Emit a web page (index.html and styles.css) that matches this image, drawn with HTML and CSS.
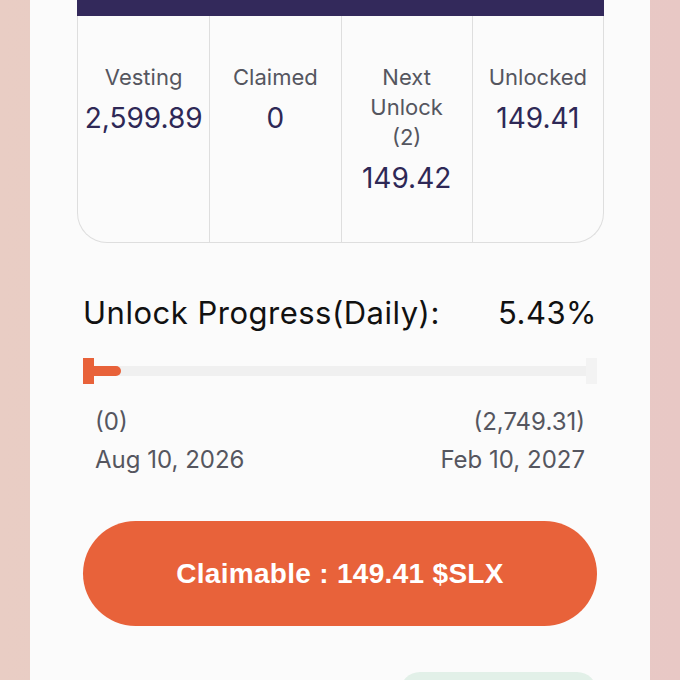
FILE: index.html
```html
<!DOCTYPE html>
<html lang="en">
<head>
    <meta charset="UTF-8">
    <meta name="viewport" content="width=device-width, initial-scale=1.0">
    <title>Vesting Overview</title>
    <link rel="stylesheet" href="styles.css">
</head>
<body>
    <div class="card">
        <div class="stats">
            <div class="stats-head"></div>
            <div class="stats-row">
                <div class="cell">
                    <div class="label">Vesting</div>
                    <div class="value">2,599.89</div>
                </div>
                <div class="cell">
                    <div class="label">Claimed</div>
                    <div class="value">0</div>
                </div>
                <div class="cell">
                    <div class="label">Next<br>Unlock<br>(2)</div>
                    <div class="value">149.42</div>
                </div>
                <div class="cell">
                    <div class="label">Unlocked</div>
                    <div class="value">149.41</div>
                </div>
            </div>
        </div>

        <div class="progress">
            <div class="progress-title">
                <span>Unlock Progress(Daily):</span>
                <span>5.43%</span>
            </div>
            <div class="bar">
                <div class="bar-start"></div>
                <div class="bar-track">
                    <div class="bar-fill" style="width: 5.43%;"></div>
                </div>
                <div class="bar-end"></div>
            </div>
            <div class="bar-labels">
                <div>
                    <div>(0)</div>
                    <div>Aug 10, 2026</div>
                </div>
                <div class="right">
                    <div>(2,749.31)</div>
                    <div>Feb 10, 2027</div>
                </div>
            </div>
        </div>

        <button class="claim">Claimable : 149.41 $SLX</button>

        <div class="footer">
            <div class="pill"></div>
        </div>
    </div>
</body>
</html>
```

FILE: styles.css
```css
body {
    margin: 0;
    font-family: Inter, "Noto Sans", sans-serif;
    background: linear-gradient(90deg, #e9cdc4 0%, #e8c8c5 100%);
    min-height: 680px;
}
.card {
    margin: 0 30px;
    min-height: 680px;
    background-color: #fbfbfb;
    padding: 0 46px 0 47px;
    box-sizing: border-box;
}
.stats-head {
    height: 16px;
    background-color: #33295b;
}
.stats-row {
    display: grid;
    grid-template-columns: repeat(4, 1fr);
    height: 227px;
    border: 1px solid #dedede;
    border-top: none;
    border-radius: 0 0 30px 30px;
    box-sizing: border-box;
}
.cell {
    text-align: center;
    padding-top: 46px;
    border-left: 1px solid #dedede;
}
.cell:first-child {
    border-left: none;
}
.label {
    font-size: 22px;
    line-height: 30px;
    color: #55565f;
}
.value {
    margin-top: 9px;
    font-size: 28px;
    line-height: 34px;
    color: #2e2856;
}
.progress {
    padding: 0 7px 0 6px;
}
.progress-title {
    display: flex;
    justify-content: space-between;
    margin-top: 52px;
    font-size: 31px;
    line-height: 36px;
    color: #111;
    letter-spacing: 0.5px;
}
.bar {
    display: flex;
    align-items: center;
    height: 26px;
    margin-top: 27px;
}
.bar-start {
    width: 11px;
    height: 26px;
    background-color: #e8623a;
}
.bar-end {
    width: 11px;
    height: 26px;
    background-color: #f3f3f3;
}
.bar-track {
    flex: 1;
    height: 10px;
    background-color: #f0f0f0;
}
.bar-fill {
    height: 100%;
    background-color: #e8623a;
    border-radius: 0 5px 5px 0;
}
.bar-labels {
    display: flex;
    justify-content: space-between;
    margin-top: 19px;
    padding: 0 12px;
    font-size: 24px;
    line-height: 38px;
    color: #55565f;
}
.bar-labels .right {
    text-align: right;
}
.claim {
    display: block;
    width: 514px;
    height: 105px;
    margin: 42px 0 0 6px;
    border: none;
    border-radius: 53px;
    background-color: #e8623a;
    color: #fff;
    font-family: "Liberation Sans", Arial, sans-serif;
    font-size: 28px;
    font-weight: bold;
    letter-spacing: 0.3px;
    cursor: pointer;
}
.footer {
    display: flex;
    justify-content: flex-end;
    margin-top: 46px;
    padding-right: 7px;
}
.pill {
    width: 197px;
    height: 40px;
    border-radius: 20px;
    background-color: #e2f0e8;
}
```
